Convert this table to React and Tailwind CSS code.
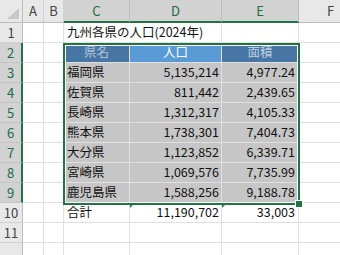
import React from "react";

const cols = ["A", "B", "C", "D", "E", "F"];
const selCols = ["C", "D", "E"];

const rows = [
  ["福岡県", "5,135,214", "4,977.24"],
  ["佐賀県", "811,442", "2,439.65"],
  ["長崎県", "1,312,317", "4,105.33"],
  ["熊本県", "1,738,301", "7,404.73"],
  ["大分県", "1,123,852", "6,339.71"],
  ["宮崎県", "1,069,576", "7,735.99"],
  ["鹿児島県", "1,588,256", "9,188.78"],
];

const font = { fontFamily: '"Noto Sans CJK JP", "Noto Sans", sans-serif' };

const RowHead = ({ n, selected }) => (
  <div
    className={
      "flex items-center justify-center text-[13px] " +
      (selected
        ? "bg-[#d2d2d2] text-[#1e6b45] border-r-2 border-r-[#217346] border-b border-b-[#c4c4c4]"
        : "bg-[#e8e8e8] text-[#444] border-r border-r-[#bdbdbd] border-b border-b-[#d0d0d0]")
    }
  >
    {n}
  </div>
);

const Cell = ({ children, className = "" }) => (
  <div className={"flex items-center border-r border-b border-[#e0e0e0] text-[12.5px] text-[#111] whitespace-nowrap " + className}>
    {children}
  </div>
);

const ErrMark = () => (
  <span className="absolute left-0 top-0 w-0 h-0 border-t-[5px] border-t-[#1f8a3f] border-r-[5px] border-r-transparent" />
);

export default function App() {
  return (
    <div className="relative w-[340px] h-[255px] overflow-hidden bg-white" style={font}>
      <div className="grid grid-cols-[23px_21px_20px_66px_92px_77px_64px] grid-rows-[23px_repeat(12,20px)]">
        {/* corner */}
        <div className="relative bg-[#e8e8e8] border-r border-r-[#bdbdbd] border-b border-b-[#bdbdbd]">
          <svg className="absolute right-[3px] bottom-[3px]" width="12" height="11" viewBox="0 0 12 11">
            <polygon points="12,0 12,11 0,11" fill="#c8c8c8" />
          </svg>
        </div>
        {cols.map((c) => {
          const sel = selCols.includes(c);
          return (
            <div
              key={c}
              className={
                "flex items-center justify-center text-[13px] " +
                (sel
                  ? "bg-[#d2d2d2] text-[#1e6b45] border-r border-r-[#bdbdbd] border-b-2 border-b-[#217346]"
                  : "bg-[#e8e8e8] text-[#444] border-r border-r-[#d0d0d0] border-b border-b-[#bdbdbd]")
              }
            >
              {c}
            </div>
          );
        })}

        {/* row 1 */}
        <RowHead n={1} />
        <Cell />
        <Cell />
        <Cell className="pl-[3px] overflow-visible relative z-10 border-r-0">九州各県の人口(2024年)</Cell>
        <Cell />
        <Cell />
        <Cell />

        {/* row 2 */}
        <RowHead n={2} selected />
        <Cell />
        <Cell />
        <Cell className="justify-center bg-[#4776a5] text-[#b0c3d8] border-[#4776a5]">県名</Cell>
        <Cell className="justify-center bg-[#5b9bd5] text-white border-[#5b9bd5]">人口</Cell>
        <Cell className="justify-center bg-[#4776a5] text-[#c0cfe0] border-[#4776a5]">面積</Cell>
        <Cell />

        {rows.map((r, i) => (
          <React.Fragment key={r[0]}>
            <RowHead n={i + 3} selected />
            <Cell />
            <Cell />
            <Cell className="pl-[3px] bg-[#c6c6c6] border-[#dadada]">{r[0]}</Cell>
            <Cell className="justify-end pr-[2px] bg-[#c6c6c6] border-[#dadada]">{r[1]}</Cell>
            <Cell className="justify-end pr-[3px] bg-[#c6c6c6] border-[#dadada]">{r[2]}</Cell>
            <Cell />
          </React.Fragment>
        ))}

        {/* row 10 */}
        <RowHead n={10} />
        <Cell />
        <Cell />
        <Cell className="pl-[3px]">合計</Cell>
        <Cell className="relative justify-end pr-[2px]">
          <ErrMark />
          11,190,702
        </Cell>
        <Cell className="relative justify-end pr-[3px]">
          <ErrMark />
          33,003
        </Cell>
        <Cell />

        {[11, 12].map((n) => (
          <React.Fragment key={n}>
            <RowHead n={n === 11 ? n : ""} />
            <Cell />
            <Cell />
            <Cell />
            <Cell />
            <Cell />
            <Cell />
          </React.Fragment>
        ))}
      </div>

      {/* selection outline */}
      <div className="absolute left-[63px] top-[43px] w-[237px] h-[162px] border-2 border-[#217346] shadow-[inset_0_0_0_1px_#ffffff] pointer-events-none" />
      <div className="absolute left-[296px] top-[201px] w-[6px] h-[6px] bg-[#217346] outline outline-1 outline-white pointer-events-none" />
    </div>
  );
}
